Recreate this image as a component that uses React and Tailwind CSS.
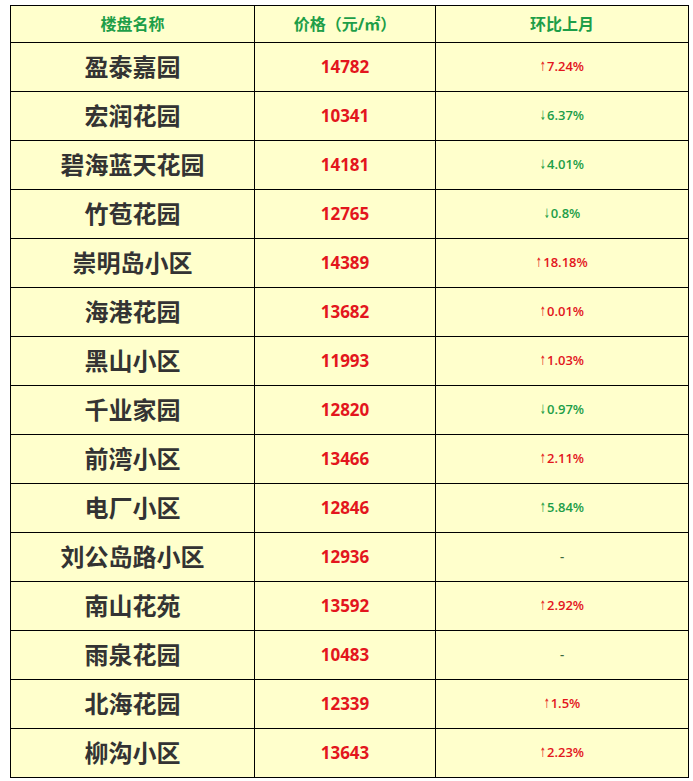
const ROWS = [
  { name: '盈泰嘉园', price: '14782', change: '↑7.24%', color: 'red' },
  { name: '宏润花园', price: '10341', change: '↓6.37%', color: 'green' },
  { name: '碧海蓝天花园', price: '14181', change: '↓4.01%', color: 'green' },
  { name: '竹苞花园', price: '12765', change: '↓0.8%', color: 'green' },
  { name: '崇明岛小区', price: '14389', change: '↑18.18%', color: 'red' },
  { name: '海港花园', price: '13682', change: '↑0.01%', color: 'red' },
  { name: '黑山小区', price: '11993', change: '↑1.03%', color: 'red' },
  { name: '千业家园', price: '12820', change: '↓0.97%', color: 'green' },
  { name: '前湾小区', price: '13466', change: '↑2.11%', color: 'red' },
  { name: '电厂小区', price: '12846', change: '↑5.84%', color: 'green' },
  { name: '刘公岛路小区', price: '12936', change: '-', color: 'dash' },
  { name: '南山花苑', price: '13592', change: '↑2.92%', color: 'red' },
  { name: '雨泉花园', price: '10483', change: '-', color: 'dash' },
  { name: '北海花园', price: '12339', change: '↑1.5%', color: 'red' },
  { name: '柳沟小区', price: '13643', change: '↑2.23%', color: 'red' },
];

const CHANGE_COLORS = {
  red: 'text-[#e3161d]',
  green: 'text-[#1d9e48]',
  dash: 'text-[#3d6b3d]',
};

function Change({ text }) {
  const arrow = text[0] === '↑' || text[0] === '↓' ? text[0] : null;
  if (!arrow) return text;
  return (
    <>
      <span className="inline-block w-[7px] overflow-visible font-normal" style={{ fontFamily: '"DejaVu Sans Condensed", "DejaVu Sans", sans-serif' }}>
        <span className="inline-block scale-x-[0.6] origin-left">{arrow}</span>
      </span>
      {text.slice(1)}
    </>
  );
}

export default function App() {
  return (
    <div className="w-[693px] h-[781px] bg-white pt-[5px] pl-[10px]" style={{ fontFamily: '"Open Sans", "Noto Sans CJK SC", sans-serif' }}>
      <table className="w-[679px] border-collapse bg-[#ffffcc] table-fixed">
        <colgroup>
          <col className="w-[244px]" />
          <col className="w-[181px]" />
          <col />
        </colgroup>
        <thead>
          <tr className="h-[37px]">
            <th className="border border-black text-[16px] font-bold text-[#1d9e48] p-0">楼盘名称</th>
            <th className="border border-black text-[16px] font-bold text-[#1d9e48] p-0">价格（元/㎡）</th>
            <th className="border border-black text-[16px] font-bold text-[#1d9e48] p-0">环比上月</th>
          </tr>
        </thead>
        <tbody>
          {ROWS.map((r) => (
            <tr key={r.name} className="h-[49px]">
              <td className="border border-black text-center text-[24px] font-bold text-[#333333] p-0">{r.name}</td>
              <td className="border border-black text-center text-[17px] font-bold text-[#e3161d] p-0">{r.price}</td>
              <td className={`border border-black text-center text-[13px] font-semibold p-0 ${CHANGE_COLORS[r.color]}`}>
                <Change text={r.change} />
              </td>
            </tr>
          ))}
        </tbody>
      </table>
    </div>
  );
}
